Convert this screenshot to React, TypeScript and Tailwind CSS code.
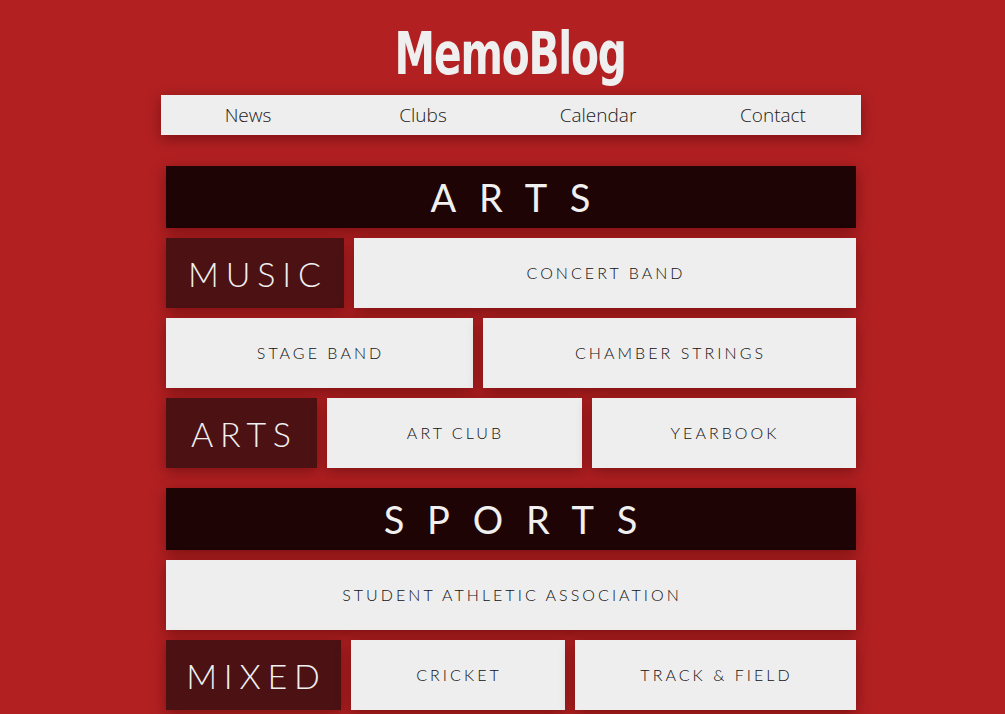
const shadow = 'shadow-[0_4px_14px_rgba(60,0,0,0.45)]';

function Header({ title }: { title: string }) {
    return (
        <div className={`h-[62px] bg-[#1e0405] flex items-center justify-center text-[#f0f0f0] text-[38px] font-normal tracking-[0.6em] pl-[0.6em] ${shadow}`}>
            {title}
        </div>
    );
}

function Label({ text, width }: { text: string; width: string }) {
    return (
        <div className={`${width} h-[70px] shrink-0 bg-[#4b1113] flex items-center justify-center text-[#f0f0f0] text-[34px] font-light tracking-[0.2em] pl-[0.2em] ${shadow}`}>
            {text}
        </div>
    );
}

function Item({ text, width }: { text: string; width: string }) {
    return (
        <div className={`${width} h-[70px] bg-[#eeeeee] flex items-center justify-center text-[#111] text-[16px] font-light tracking-[0.19em] pl-[0.19em] ${shadow}`}>
            {text}
        </div>
    );
}

export default function App() {
    return (
        <div className="min-h-[714px] bg-[#b22022] pl-[16px] font-['Lato',sans-serif]">
            <header className="pt-[22px] text-center">
                <h1 className="inline-block scale-x-[0.78] text-[#efefef] text-[58px] leading-[64px] font-bold font-['DejaVu_Sans_Condensed','DejaVu_Sans',sans-serif] tracking-[-1.5px]">
                    MemoBlog
                </h1>
            </header>
            <nav className={`mx-auto mt-[9px] w-[700px] h-[40px] bg-[#eeeeee] grid grid-cols-4 items-center text-center text-[19px] text-[#1a1a1a] font-['Open_Sans',sans-serif] font-light ${shadow}`}>
                <a>News</a>
                <a>Clubs</a>
                <a>Calendar</a>
                <a>Contact</a>
            </nav>
            <main className="mx-auto mt-[31px] w-[690px] flex flex-col gap-[10px]">
                <Header title="ARTS" />
                <div className="flex gap-[10px]">
                    <Label text="MUSIC" width="w-[178px]" />
                    <Item text="CONCERT BAND" width="flex-1" />
                </div>
                <div className="flex gap-[10px]">
                    <Item text="STAGE BAND" width="w-[307px]" />
                    <Item text="CHAMBER STRINGS" width="flex-1" />
                </div>
                <div className="flex gap-[10px]">
                    <Label text="ARTS" width="w-[151px]" />
                    <Item text="ART CLUB" width="w-[255px]" />
                    <Item text="YEARBOOK" width="flex-1" />
                </div>
                <div className="mt-[10px]">
                    <Header title="SPORTS" />
                </div>
                <Item text="STUDENT ATHLETIC ASSOCIATION" width="w-full" />
                <div className="flex gap-[10px]">
                    <Label text="MIXED" width="w-[175px]" />
                    <Item text="CRICKET" width="w-[214px]" />
                    <Item text="TRACK & FIELD" width="flex-1" />
                </div>
            </main>
        </div>
    );
}
